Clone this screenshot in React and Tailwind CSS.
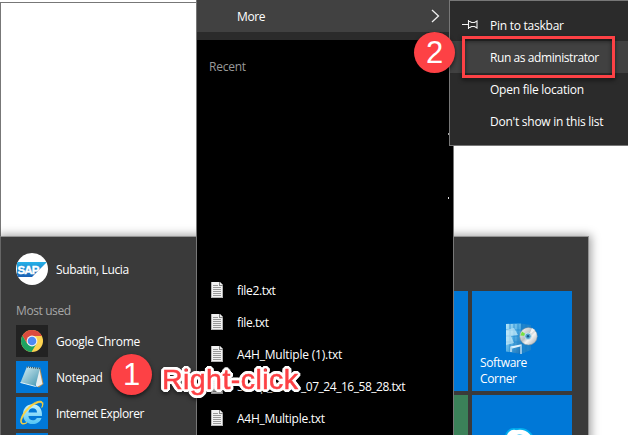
import React from "react";

const apps = [
  { name: "Google Chrome", icon: <ChromeIcon />, tile: "bg-[#222]", text: "tracking-[-0.27px]" },
  { name: "Notepad", icon: <NotepadIcon />, tile: "bg-[#0078d7]", text: "tracking-[-0.29px]" },
  { name: "Internet Explorer", icon: <ExplorerIcon />, tile: "bg-[#0078d7]", text: "tracking-[-0.42px]" },
];

const files = [
  { prefix: "", name: "file2.txt", text: "tracking-[-0.35px]" },
  { prefix: "", name: "file.txt", text: "tracking-[-0.4px]" },
  { prefix: "", name: "A4H_Multiple (1).txt", text: "tracking-[-0.2px]" },
  { prefix: "Setup_2018", name: "_07_24_16_58_28.txt", text: "tracking-[-0.47px]" },
  { prefix: "", name: "A4H_Multiple.txt", text: "tracking-[-0.27px]" },
];

function SapAvatar() {
  return (
    <svg width="32" height="32" viewBox="0 0 32 32">
      <defs>
        <linearGradient id="sap" x1="0" y1="0" x2="0" y2="1">
          <stop offset="0" stopColor="#25b1e8" />
          <stop offset="1" stopColor="#1b60b4" />
        </linearGradient>
        <clipPath id="round"><circle cx="16" cy="16" r="16" /></clipPath>
      </defs>
      <circle cx="16" cy="16" r="16" fill="#fff" />
      <g clipPath="url(#round)">
        <path d="M1 9H31L16 24H1Z" fill="url(#sap)" />
        <text x="1.5" y="20.6" fontFamily="Liberation Sans, sans-serif" fontWeight="700" fontSize="11.5" textLength="22" fill="#fff" stroke="#fff" strokeWidth=".4">SAP</text>
      </g>
    </svg>
  );
}

function ChromeIcon() {
  return (
    <svg width="32" height="32" viewBox="0 0 32 32">
      <circle cx="16" cy="16" r="11" fill="#fdd351" />
      <path d="M6.47 10.5A11 11 0 0 0 15.5 27L20.6 18.6L11.3 18.7Z" fill="#1da362" />
      <path d="M6.47 10.5A11 11 0 0 1 25.9 11H16L11.3 18.7Z" fill="#dc4b3e" />
      <circle cx="16" cy="16" r="5.4" fill="#f4f4f4" />
      <circle cx="16" cy="16" r="4.3" fill="#4d8af3" />
    </svg>
  );
}

function NotepadIcon() {
  return (
    <svg width="32" height="32" viewBox="0 0 32 32">
      <defs>
        <linearGradient id="note" x1="0" y1="0" x2="1" y2="1">
          <stop offset="0" stopColor="#d7f1f6" />
          <stop offset=".5" stopColor="#8fc3d3" />
          <stop offset="1" stopColor="#3f95b0" />
        </linearGradient>
      </defs>
      <path d="M24 6L27.5 23L23 26.5L20 25Z" fill="#b58f55" />
      <path d="M23 6L26.5 23L21 26L19 22Z" fill="#e6eef0" />
      <path d="M11 5.5L24 7L19.5 25L4.5 21.5Z" fill="url(#note)" />
      <path d="M11 6L24 7.5" stroke="#405861" strokeWidth="1.5" strokeDasharray="1 1" />
      <path d="M4.5 21.5L19.5 25.4L22 24" fill="none" stroke="#e4f6fa" />
    </svg>
  );
}

function ExplorerIcon() {
  return (
    <svg width="32" height="32" viewBox="0 0 32 32">
      <defs>
        <linearGradient id="ie" x1="0" y1="0" x2="0" y2="1">
          <stop offset="0" stopColor="#c5f2ff" />
          <stop offset="1" stopColor="#53c5f5" />
        </linearGradient>
      </defs>
      <path fillRule="evenodd" d="M26 19H12.4C12.8 22 14.4 23.3 16.8 23.3C18.7 23.3 20 22.6 20.8 21H25.5C24.1 25.2 20.8 27 16.7 27C10.8 27 7 23.2 7 17.2C7 11.1 11 7.2 16.6 7.2C22.6 7.2 26.4 11.4 26 19ZM12.4 15.6H21.1C20.8 12.6 19.2 11.3 16.8 11.3C14.4 11.3 12.8 12.7 12.4 15.6Z" fill="url(#ie)" />
      <path d="M25.8 10.5C27.4 6.8 26.2 4.6 22.2 5.7C16.2 7.3 8 15.4 5.8 22.3C4.7 26.3 6.7 27.7 11 25.5C6.4 28.8 3.6 26.8 5 21.6C7 14.6 15 6.1 22 4.4C27 3.4 28.2 6 25.8 10.5Z" fill="#ffd33d" stroke="#ffd33d" strokeWidth=".8" />
    </svg>
  );
}

function FileIcon() {
  return (
    <svg width="12" height="16" viewBox="0 0 12 16" shapeRendering="crispEdges">
      <path d="M0 0H9L12 3V16H0Z" fill="#f2f2f2" />
      <path d="M8 0H9L12 3V4H8Z" fill="#888" />
      <path d="M9 1H10V2H11V3H9Z" fill="#eee" />
      <path d="M2 3.5H7M2 5.5H10M2 7.5H10M2 9.5H10M2 11.5H10M2 13.5H10" stroke="#999" />
      <path d="M0 15.5H12M.5 0V16M11.5 4V16" stroke="#b5b5b5" fill="none" />
    </svg>
  );
}

function SoftwareIcon() {
  return (
    <svg width="32" height="32" viewBox="0 0 32 32">
      <defs>
        <linearGradient id="tower" x1="0" y1="0" x2="1" y2="1">
          <stop offset="0" stopColor="#b6e6fa" />
          <stop offset=".5" stopColor="#54afe4" />
          <stop offset="1" stopColor="#1669ae" />
        </linearGradient>
        <linearGradient id="disc" x1="0" y1="0" x2="1" y2="1">
          <stop offset="0" stopColor="#fff" />
          <stop offset=".45" stopColor="#b8bec1" />
          <stop offset=".6" stopColor="#f4f4f4" />
          <stop offset="1" stopColor="#9ba1a5" />
        </linearGradient>
      </defs>
      <path d="M0 1L15 .5V31L0 28.5Z" fill="url(#tower)" />
      <path d="M15 .5L25 2V27L15 31Z" fill="#1c80c9" />
      <path d="M4 1V29M8 1V30M12 1V30M0 7H24M0 13H24M0 19H24M18 1V30M22 2V28" stroke="#238cd0" strokeWidth=".8" />
      <path d="M0 7L8 5L12 12L5 13L8 20L0 22Z" fill="#d1f0fb" opacity=".65" />
      <path d="M5 29V24L15 22V31M6 25L14 23" fill="none" stroke="#e2f5ff" strokeWidth="1.2" />
      <circle cx="22.5" cy="13.2" r="8.8" fill="url(#disc)" stroke="#738b99" strokeWidth=".5" />
      <path d="M22.5 13.2L14.4 12.5L16 8.5Z" fill="#78e13e" />
      <path d="M22.5 13.2L26 5L29 7Z" fill="#fff" opacity=".8" />
      <circle cx="22" cy="13.2" r="3.3" fill="#57a7d0" stroke="#c9e6f1" />
      <circle cx="22" cy="13.2" r="1.2" fill="#17598e" />
    </svg>
  );
}

function SkypeIcon() {
  return (
    <svg width="32" height="32" viewBox="0 0 32 32">
      <circle cx="10" cy="10" r="9" fill="#00aff0" />
      <circle cx="16" cy="16" r="15" fill="#00aff0" />
      <circle cx="10" cy="10" r="7.2" fill="#fff" />
      <circle cx="16" cy="16" r="13.2" fill="#fff" />
      <path d="M21 12C19 7.5 10.5 8.5 11 12.5C11.5 17 21 15 21 19.5C21 24 12 24 10.5 19.5" fill="none" stroke="#00aff0" strokeWidth="3" />
    </svg>
  );
}

function PinIcon() {
  return (
    <svg width="16" height="10" viewBox="0 0 16 10" fill="none" stroke="#f2f2f2" strokeWidth="1.1">
      <path d="M0 4.5H6M6.5 0V9M6.5 1.5H8L9.5 2.5H12.5L15 1V8L12.5 6.5H9.5L8 7.5H6.5" />
    </svg>
  );
}

function Badge({ children }) {
  return (
    <div className="flex h-[41px] w-[41px] items-center justify-center rounded-full bg-[#fd4145] font-['Liberation_Sans',sans-serif] text-[31px] leading-none text-white shadow-[0_2px_4px_rgba(0,0,0,0.6)]">
      {children}
    </div>
  );
}

export default function App() {
  return (
    <div className="relative h-[435px] w-[628px] overflow-hidden bg-white font-['Open_Sans','Noto_Sans',sans-serif] text-[12px] leading-4 text-white">
      <div className="absolute left-0 top-[2px] h-[300px] w-[220px] border-l border-t border-[#777] bg-white" />

      {/* Start menu */}
      <div className="absolute left-0 top-[236px] flex h-[220px] w-[589px] justify-between border border-[#929292] border-l-[#666] bg-[#3a3a3a] shadow-[0_1px_9px_2px_rgba(0,0,0,0.38)]">
        <div className="flex flex-col pl-[15px] pt-4">
          <div className="flex items-center gap-2">
            <SapAvatar />
            <span className="pt-[2px] tracking-[-0.37px]">Subatin, Lucia</span>
          </div>
          <div className="mt-[17px] h-[23px] shrink-0 pt-px tracking-[-0.4px] text-[#a6a6a6]">Most used</div>
          <div className="flex flex-col gap-1">
            {apps.map((a) => (
              <div key={a.name} className="flex h-8 shrink-0 items-center gap-2">
                <div className={"h-8 w-8 " + a.tile}>{a.icon}</div>
                <span className={"pt-[2px] " + a.text}>{a.name}</span>
              </div>
            ))}
            <div className="h-8 w-8 shrink-0 bg-[#0078d7]" />
          </div>
        </div>
        <div className="mr-4 mt-[54px] grid grid-cols-[100px_100px] grid-rows-[100px_100px] gap-1">
          <div className="bg-[#0078d7]" />
          <div className="flex flex-col bg-[#0078d7] px-2 pt-8">
            <div className="flex h-[32px] justify-center"><SoftwareIcon /></div>
            <div className="tracking-[-0.35px]">Software<br />Corner</div>
          </div>
          <div className="bg-[#3b8159]" />
          <div className="flex justify-center bg-[#0078d7] pr-1 pt-8"><SkypeIcon /></div>
        </div>
      </div>

      {/* Jump list */}
      <div className="absolute left-[196px] top-0 flex h-[435px] w-[258px] flex-col border-x border-[#777] bg-black">
        <div className="flex h-8 shrink-0 items-center justify-between bg-[#414141] pl-10 pr-[13px]">
          <span className="pt-[2px] tracking-[-0.35px]">More</span>
          <svg width="9" height="14" viewBox="0 0 9 14" fill="none" stroke="#eee" strokeWidth="1.3"><path d="M1 1L7.5 7L1 13" /></svg>
        </div>
        <div className="h-2 shrink-0 bg-[#2b2b2b]" />
        <div className="mt-[19px] pl-3 tracking-[-0.25px] text-[#999]">Recent</div>
        <div className="mt-[199px] flex flex-col">
          {files.map((f) => (
            <div key={f.name} className="flex h-8 shrink-0 items-center gap-[14px] pl-[14px]">
              <FileIcon />
              <span className={"flex whitespace-nowrap pt-[2px] " + f.text}>
                {f.prefix && <span className="w-[64px]">{f.prefix}</span>}
                <span>{f.name}</span>
              </span>
            </div>
          ))}
        </div>
      </div>
      <div className="absolute left-[448px] top-[133px] h-[2px] w-px bg-[#aaa]" />
      <div className="absolute left-[448px] top-[197px] h-[2px] w-px bg-[#ddd]" />

      {/* Context submenu */}
      <div className="absolute left-[449px] top-0 flex h-[146px] w-[190px] flex-col border border-[#777] bg-[#2b2b2b] pt-2 tracking-[-0.25px]">
        <div className="flex h-8 items-center gap-[11px] pl-3"><PinIcon /><span className="pl-px pt-[2px]">Pin to taskbar</span></div>
        <div className="flex h-8 items-center bg-[#414141] pl-10 pt-[2px] tracking-[-0.42px]">Run as administrator</div>
        <div className="flex h-8 items-center pl-10 pt-[2px]">Open file location</div>
        <div className="flex h-8 items-center pl-10 pt-[2px]">Don't show in this list</div>
      </div>

      {/* Callouts */}
      <div className="absolute left-[462px] top-[36px] h-[42px] w-[153px] border-[3px] border-[#fd4145] drop-shadow-[0_2px_2px_rgba(0,0,0,0.6)]" />
      <div className="absolute left-[414px] top-[32px]"><Badge>2</Badge></div>
      <div className="absolute left-[111px] top-[354px]"><Badge>1</Badge></div>
      <div className="absolute left-[162px] top-[362px] whitespace-nowrap font-['Liberation_Sans',sans-serif] text-[28.5px] leading-[34px] tracking-[0.45px] text-[#fd4145] drop-shadow-[0_2px_2px_rgba(0,0,0,0.5)] [-webkit-text-stroke:0.5px_#fd4145] [text-shadow:3px_0_#fff,-3px_0_#fff,0_3px_#fff,0_-3px_#fff,2px_2px_#fff,-2px_2px_#fff,2px_-2px_#fff,-2px_-2px_#fff,3px_1px_#fff,-3px_1px_#fff,3px_-1px_#fff,-3px_-1px_#fff,1px_3px_#fff,-1px_3px_#fff,1px_-3px_#fff,-1px_-3px_#fff]">
        Right-click
      </div>
    </div>
  );
}
